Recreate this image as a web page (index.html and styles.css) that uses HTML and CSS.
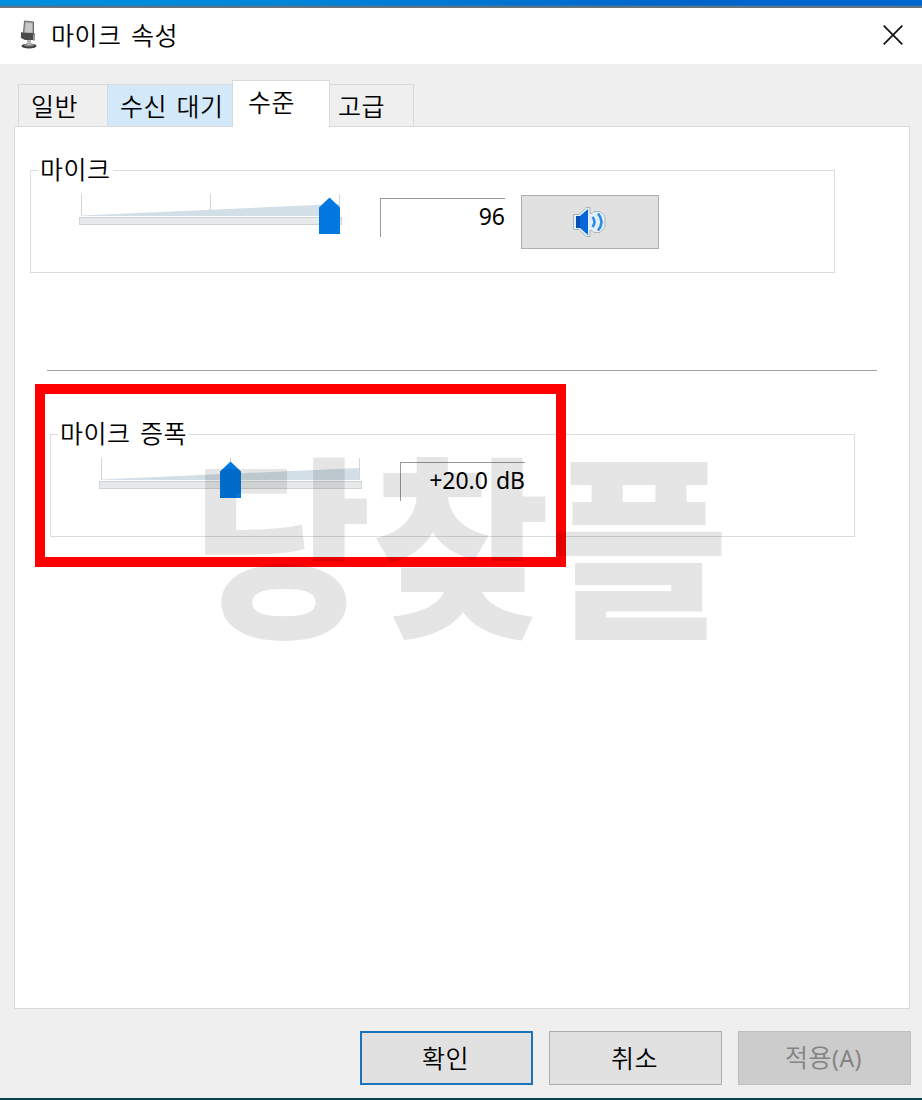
FILE: index.html
```html
<!DOCTYPE html>
<html lang="ko">
<head>
    <meta charset="UTF-8">
    <meta name="viewport" content="width=device-width, initial-scale=1.0">
    <title>마이크 속성</title>
    <link rel="stylesheet" href="styles.css">
</head>
<body>
<div class="window">
    <div class="titlebar">
        <svg class="mic-icon" width="18" height="30" viewBox="0 0 18 30">
            <ellipse cx="9" cy="26" rx="7.500" ry="2.500" fill="#3c3c3c"/>
            <ellipse cx="9" cy="25" rx="5" ry="1.500" fill="#8a8a8a"/>
            <path d="M7 18h4v7H7z" fill="#b5b5b5"/>
            <path d="M4.500 1l9 1v12l-10-1z" fill="#a9a9a9" stroke="#666" stroke-width="1"/>
            <path d="M6 3l6 .5v9L5 12z" fill="#c8c8c8"/>
            <path d="M1 12l3 1h9l2 1v6H5l-4-2z" fill="#4a4a4a"/>
            <path d="M13 14l2 1v5l-2 1z" fill="#999"/>
        </svg>
        <span class="title">마이크 속성</span>
        <svg class="close" width="20" height="20" viewBox="0 0 20 20">
            <path d="M.7.7l18.6 18.6M19.3.7L.7 19.3" stroke="#111" stroke-width="1.7"/>
        </svg>
    </div>

    <div class="tabs">
        <div class="tab general">일반</div>
        <div class="tab listen">수신 대기</div>
        <div class="tab levels">수준</div>
        <div class="tab advanced">고급</div>
    </div>

    <div class="pane">
        <div class="group">
            <div class="legend">마이크</div>
            <div class="controls">
                <svg class="slider" width="263" height="40" viewBox="0 0 263 40">
                    <path d="M2.5 0v22M131.5 0v22M260.5 0v22" stroke="#d5d5d5"/>
                    <path d="M2 21.5L260 10v12H2z" fill="#d3dfe6"/>
                    <rect x=".5" y="23.5" width="262" height="7" fill="#e7eaea" stroke="#d0d3d3"/>
                    <path d="M240 13.500l10.500-10 10.500 10V40h-21z" fill="#0078e0"/>
                </svg>
                <div class="value">96</div>
                <button class="speaker">
                    <svg width="36" height="32" viewBox="0 0 36 32">
                        <path d="M1.500 8.500H7l7-7h4v6h2l2-2h6l5 5v11l-5 5h-6l-2-2h-2v6h-4l-7-7H1.500z" fill="#e3eff7" stroke="#a9b4bb"/>
                        <path d="M4 10h4v12H4z" fill="#0a4fb4"/>
                        <path d="M8 10l8-7v26l-8-7z" fill="#0867d8"/>
                        <path d="M20.500 11q4 5 0 10M26 7.500q7 8.500 0 17" fill="none" stroke="#2b8be8" stroke-width="2.600"/>
                    </svg>
                </button>
            </div>
        </div>

        <div class="divider"></div>

        <div class="group boost">
            <div class="legend">마이크 증폭</div>
            <div class="controls">
                <svg class="slider" width="263" height="40" viewBox="0 0 263 40">
                    <path d="M2.5 0v22M131.5 0v22M260.5 0v22" stroke="#d5d5d5"/>
                    <path d="M2 21.5L260 10v12H2z" fill="#d3dfe6"/>
                    <rect x=".5" y="23.5" width="262" height="7" fill="#e7eaea" stroke="#d0d3d3"/>
                    <path d="M121 13.500l10.500-10 10.500 10V40h-21z" fill="#0078e0"/>
                </svg>
                <div class="value">+20.0 dB</div>
            </div>
        </div>
    </div>

    <div class="footer">
        <button class="btn ok">확인</button>
        <button class="btn">취소</button>
        <button class="btn apply" disabled>적용<span class="key">(A)</span></button>
    </div>

    <div class="highlight"></div>
    <div class="watermark">당찾플</div>
</div>
</body>
</html>
```
FILE: styles.css
```css
* {
    box-sizing: border-box;
}
body {
    margin: 0;
    font-family: "Noto Sans CJK KR", sans-serif;
    font-size: 25px;
    font-weight: 350;
    line-height: 36px;
    letter-spacing: 0.5px;
    word-spacing: 2px;
    color: #000;
}
.window {
    position: relative;
    width: 922px;
    height: 1100px;
    overflow: hidden;
    background: #efefef;
    border-bottom: 2px solid #07404f;
}
.titlebar {
    display: flex;
    align-items: center;
    height: 64px;
    padding: 8px 19px 2px 20px;
    background: linear-gradient(#0000 5px, #52718a 6px, #6b7780 8px, #fff 8px), linear-gradient(90deg, #0090e0, #0086da 30%, #0064cc 75%, #0068d2);
}
.title {
    flex: 1;
    margin-left: 13px;
    padding-bottom: 2px;
}
.tabs {
    display: flex;
    align-items: flex-end;
    height: 63px;
    padding-left: 18px;
}
.tab {
    height: 43px;
    padding-top: 2px;
    border: 1px solid #d9d9d9;
    border-left: 0;
    white-space: nowrap;
}
.general {
    width: 90px;
    padding-left: 12px;
    border-left: 1px solid #d9d9d9;
}
.listen {
    width: 124px;
    padding-left: 12px;
    background: #d3e8f9;
    border-right: 0;
}
.levels {
    width: 98px;
    height: 47px;
    padding-left: 15px;
    background: #fff;
    border-left: 1px solid #d9d9d9;
    border-bottom: 0;
    z-index: 1;
}
.advanced {
    width: 84px;
    padding-left: 8px;
}
.pane {
    width: 896px;
    height: 883px;
    margin: -1px 0 0 14px;
    padding: 43px 0 0 15px;
    background: #fff;
    border: 1px solid #d9d9d9;
}
.group {
    width: 805px;
    height: 103px;
    border: 1px solid #dcdcdc;
}
.boost {
    margin: 63px 0 0 20px;
}
.legend {
    width: max-content;
    height: 36px;
    margin: -21px 0 0 7px;
    padding: 0 2px;
    background: #fff;
}
.controls {
    display: flex;
    align-items: flex-start;
    padding: 8px 0 0 48px;
}
.slider {
    display: block;
}
.value {
    width: 125px;
    height: 39px;
    margin: 4px 0 0 38px;
    border-left: 1px solid #999;
    border-top: 1px solid #999;
    font-family: "Noto Sans", sans-serif;
    font-size: 23px;
    font-weight: 400;
    line-height: 34px;
    letter-spacing: 0;
    text-align: right;
    white-space: nowrap;
}
.speaker {
    display: flex;
    justify-content: center;
    align-items: center;
    width: 138px;
    height: 54px;
    margin: 1px 0 0 16px;
    background: #e1e1e1;
    border: 1px solid #adadad;
}
.divider {
    width: 830px;
    height: 1px;
    margin: 97px 0 0 17px;
    background: #a0a0a0;
}
.footer {
    display: flex;
    gap: 16px;
    padding: 22px 0 0 360px;
}
.btn {
    width: 173px;
    height: 54px;
    padding: 0 2px 2px 0;
    background: #e1e1e1;
    border: 1px solid #adadad;
    font: inherit;
    letter-spacing: inherit;
    color: #000;
}
.ok {
    border: 2px solid #1a74bd;
}
.apply {
    background: #ccc;
    border-color: #bfbfbf;
    color: #838383;
}
.key {
    font-family: "Noto Sans", sans-serif;
    font-size: 23px;
    font-weight: 400;
}
/* red marker around the boost group */
.highlight {
    position: absolute;
    left: 35px;
    top: 384px;
    width: 531px;
    height: 183px;
    border: 10px solid #f00;
}
.watermark {
    position: absolute;
    left: 193px;
    top: 433px;
    font-size: 194px;
    font-weight: 900;
    line-height: 210px;
    letter-spacing: 0;
    color: rgba(0, 0, 0, 0.1);
    white-space: nowrap;
}
```
